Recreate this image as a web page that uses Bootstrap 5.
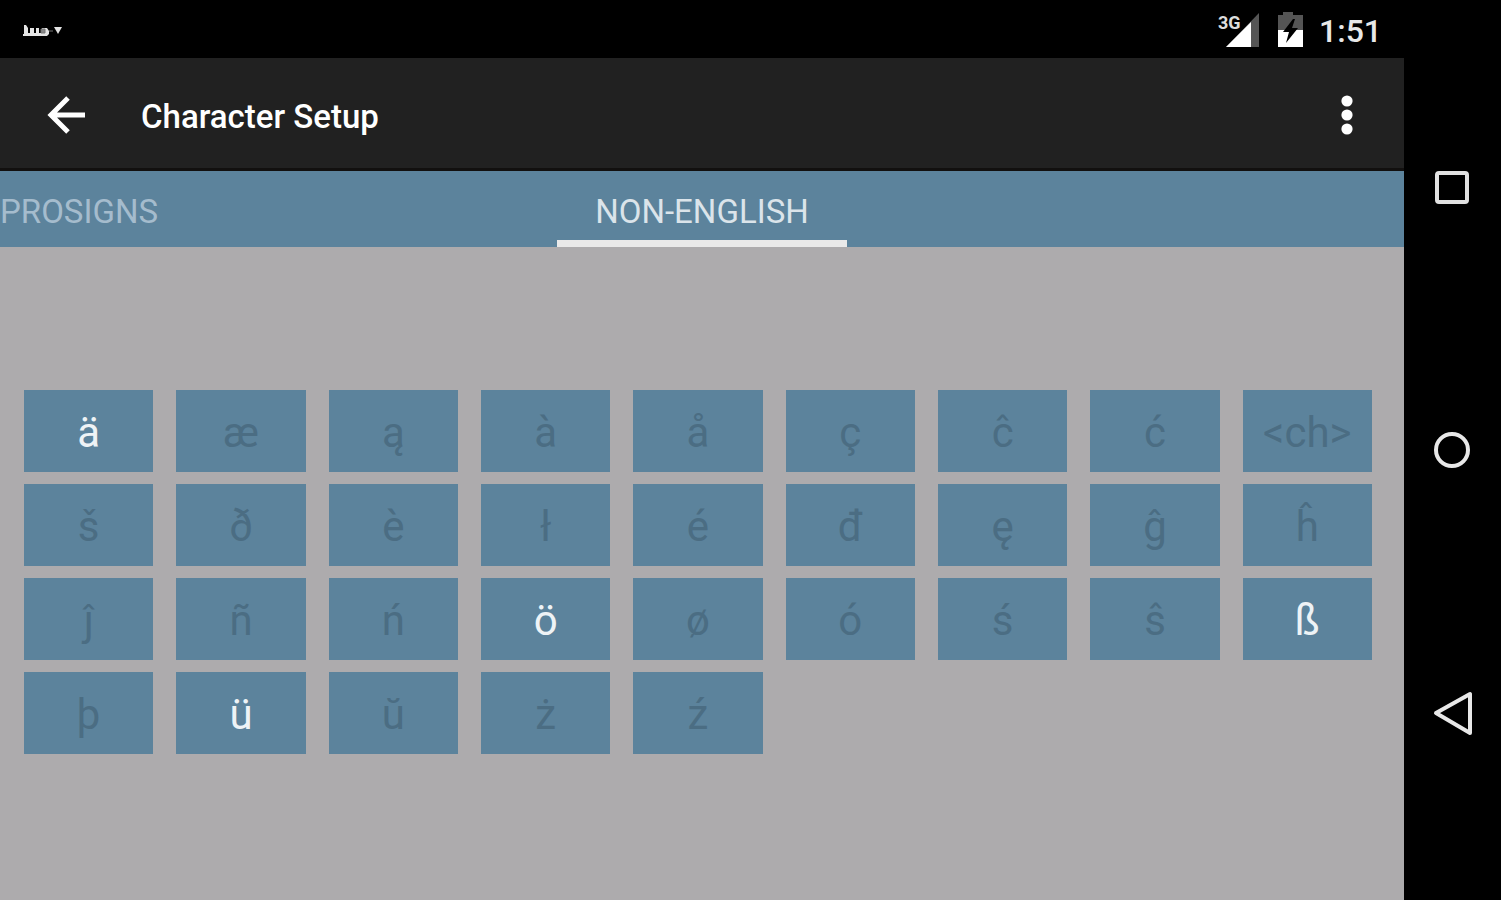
<!DOCTYPE html>
<html lang="en">
<head>
<meta charset="utf-8">
<meta name="viewport" content="width=device-width, initial-scale=1">
<title>Character Setup</title>
<link href="https://cdn.jsdelivr.net/npm/bootstrap@5.3.0/dist/css/bootstrap.min.css" rel="stylesheet">
<style>
  :root { --tile: #5c839c; --paper: #adabad; --ink: #4b6d83; }
  body { font-family: Roboto, "Noto Sans", sans-serif; background: #000; }
  button { font: inherit; }
  svg { display: block; }
  .screen { background: var(--paper); }
  .status-bar { background: #000; color: #e8e8e8; height: 58px; padding: 4px 22px 0; }
  .clock { font-size: 32px; line-height: 40px; font-weight: 500; }
  .app-bar { background: #212121; height: 113px; padding: 4px 36px 0; border-bottom: 3px solid #12100f; }
  .app-title { font-size: 33px; line-height: 40px; font-weight: 500; color: #fff; margin-left: 45px; padding-top: 4px; }
  .plain-btn { background: none; border: 0; padding: 10px; color: #fff; }
  .tab-strip { display: grid; grid-template-columns: 1fr auto 1fr; background: var(--tile); height: 76px; }
  .tab-btn { background: none; border: 0; border-bottom: 7px solid transparent; border-radius: 0; font-size: 33px; line-height: 40px; padding: 12px 38px 0; color: #a5bccd; }
  .tab-btn:first-child { justify-self: start; padding-left: 0; }
  .tab-btn.active { color: #dbe4ea; border-bottom-color: #e9e9e9; }
  .char-area { padding: 24px 32px 27px 24px; }
  .char-grid { display: grid; grid-template-columns: repeat(9, minmax(0, 1fr)); gap: 12px 23px; }
  .char-key { background: var(--tile); border: 0; height: 82px; padding: 4px 0 0; font-size: 42px; line-height: 48px; color: var(--ink); }
  .char-key[aria-pressed="true"] { color: #eef3f6; }
  .system-nav { background: #000; width: 97px; padding: 56px 0; }
</style>
</head>
<body>
<div class="d-flex min-vh-100">
  <div class="screen flex-grow-1 d-flex flex-column">
    <header>
      <div class="status-bar d-flex align-items-center justify-content-between">
        <svg width="40" height="14" viewBox="0 0 40 14" aria-hidden="true">
          <g fill="#e4e4e4"><path d="M2 1h2l2 3v5h2V4h4v5h2V4h3v5h3V4h5l2 3v3l-2 2H1v-2h1z"/><path d="M32 3h8l-4 7z"/></g>
          <path d="M19 5h4v4h-4zM27 7h4" fill="#888" stroke="#777"/>
        </svg>
        <div class="d-flex align-items-center">
          <svg width="101" height="40" viewBox="0 0 101 40" aria-label="3G signal, battery charging" role="img">
            <path d="M8 36 41 2v34z" fill="#555"/>
            <path d="M8 36 33 11v25z" fill="#fff"/>
            <text x="0" y="18" font-size="18" font-weight="700" fill="#ddd" stroke="#000" stroke-width="2" paint-order="stroke">3G</text>
            <path d="M60 4h5V1h10v3h5v15H60z" fill="#555"/>
            <path d="M60 19h25v17H60z" fill="#fff"/>
            <path d="M80 4h5v15h-5z" fill="#555"/>
            <path d="M75 8 65 21h6l-3 11 12-15h-6l3-9z" fill="#000"/>
          </svg>
          <span class="clock">1:51</span>
        </div>
      </div>
      <nav class="app-bar d-flex align-items-center">
        <button class="plain-btn" type="button" aria-label="Back">
          <svg width="40" height="40" viewBox="0 0 40 40" fill="none" stroke="#fff" stroke-width="5"><path d="M39 20H5M22 3 5 20l17 17"/></svg>
        </button>
        <h1 class="app-title mb-0 flex-grow-1">Character Setup</h1>
        <button class="plain-btn" type="button" aria-label="More options">
          <svg width="22" height="40" viewBox="0 0 22 40" fill="#fff"><circle cx="11" cy="6" r="5.6"/><circle cx="11" cy="20" r="5.6"/><circle cx="11" cy="34" r="5.6"/></svg>
        </button>
      </nav>
      <div class="tab-strip" role="tablist">
        <button class="tab-btn" type="button" role="tab" aria-selected="false">PROSIGNS</button>
        <button class="tab-btn active" type="button" role="tab" aria-selected="true">NON-ENGLISH</button>
      </div>
    </header>
    <main class="char-area flex-grow-1 d-flex flex-column justify-content-center">
      <div class="char-grid">
        <button class="char-key" type="button" aria-pressed="true">ä</button>
        <button class="char-key" type="button" aria-pressed="false">æ</button>
        <button class="char-key" type="button" aria-pressed="false">ą</button>
        <button class="char-key" type="button" aria-pressed="false">à</button>
        <button class="char-key" type="button" aria-pressed="false">å</button>
        <button class="char-key" type="button" aria-pressed="false">ç</button>
        <button class="char-key" type="button" aria-pressed="false">ĉ</button>
        <button class="char-key" type="button" aria-pressed="false">ć</button>
        <button class="char-key" type="button" aria-pressed="false">&lt;ch&gt;</button>
        <button class="char-key" type="button" aria-pressed="false">š</button>
        <button class="char-key" type="button" aria-pressed="false">ð</button>
        <button class="char-key" type="button" aria-pressed="false">è</button>
        <button class="char-key" type="button" aria-pressed="false">ł</button>
        <button class="char-key" type="button" aria-pressed="false">é</button>
        <button class="char-key" type="button" aria-pressed="false">đ</button>
        <button class="char-key" type="button" aria-pressed="false">ę</button>
        <button class="char-key" type="button" aria-pressed="false">ĝ</button>
        <button class="char-key" type="button" aria-pressed="false">ĥ</button>
        <button class="char-key" type="button" aria-pressed="false">ĵ</button>
        <button class="char-key" type="button" aria-pressed="false">ñ</button>
        <button class="char-key" type="button" aria-pressed="false">ń</button>
        <button class="char-key" type="button" aria-pressed="true">ö</button>
        <button class="char-key" type="button" aria-pressed="false">ø</button>
        <button class="char-key" type="button" aria-pressed="false">ó</button>
        <button class="char-key" type="button" aria-pressed="false">ś</button>
        <button class="char-key" type="button" aria-pressed="false">ŝ</button>
        <button class="char-key" type="button" aria-pressed="true">ß</button>
        <button class="char-key" type="button" aria-pressed="false">þ</button>
        <button class="char-key" type="button" aria-pressed="true">ü</button>
        <button class="char-key" type="button" aria-pressed="false">ŭ</button>
        <button class="char-key" type="button" aria-pressed="false">ż</button>
        <button class="char-key" type="button" aria-pressed="false">ź</button>
      </div>
    </main>
  </div>
  <nav class="system-nav flex-shrink-0 d-flex flex-column" aria-label="System">
    <button class="plain-btn flex-fill d-flex align-items-center justify-content-center" type="button" aria-label="Recent apps">
      <svg width="44" height="44" viewBox="0 0 44 44" fill="none" stroke="#e2e2e2" stroke-width="4"><rect x="6" y="8" width="30" height="29" rx="2"/></svg>
    </button>
    <button class="plain-btn flex-fill d-flex align-items-center justify-content-center" type="button" aria-label="Home">
      <svg width="44" height="44" viewBox="0 0 44 44" fill="none" stroke="#e8e8e8" stroke-width="4"><circle cx="21" cy="22" r="16"/></svg>
    </button>
    <button class="plain-btn flex-fill d-flex align-items-center justify-content-center" type="button" aria-label="Back">
      <svg width="44" height="44" viewBox="0 0 44 44" fill="none" stroke="#e8e8e8" stroke-width="4" stroke-linejoin="round"><path d="M5 22 39 3v39z"/></svg>
    </button>
  </nav>
</div>
<script src="https://cdn.jsdelivr.net/npm/bootstrap@5.3.0/dist/js/bootstrap.bundle.min.js"></script>
</body>
</html>
